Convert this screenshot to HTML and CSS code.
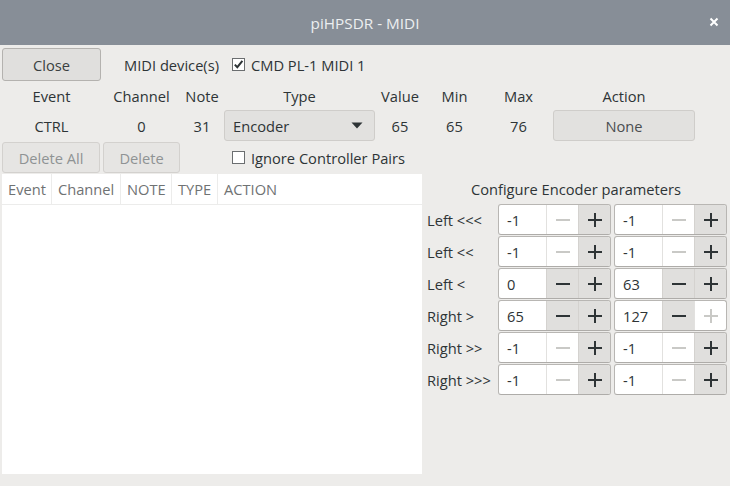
FILE: index.html
```html
<!DOCTYPE html>
<html>
<head>
<meta charset="utf-8">
<link rel="stylesheet" href="styles.css">
</head>
<body>
<div class="window">
  <header class="titlebar">
    <span class="title">piHPSDR - MIDI</span>
    <span class="close-x"><svg width="10" height="10" viewBox="0 0 10 10"><path d="M1.5 1.5 L8.5 8.5 M8.5 1.5 L1.5 8.5" stroke="#ffffff" stroke-width="2" fill="none"/></svg></span>
  </header>
  <main class="content">
    <div class="top-grid">
      <button class="btn btn-close">Close</button>
      <span class="lbl device-lbl">MIDI device(s)</span>
      <label class="check check-device">
        <span class="box"><svg width="11" height="11" viewBox="0 0 11 11"><path d="M1.8 5.6 L4.3 8.2 L9.4 1.9" stroke="#2e3436" stroke-width="2" fill="none"/></svg></span>
        <span>CMD PL-1 MIDI 1</span>
      </label>

      <span class="lbl c1">Event</span>
      <span class="lbl c2">Channel</span>
      <span class="lbl c3">Note</span>
      <span class="lbl c4">Type</span>
      <span class="lbl c5">Value</span>
      <span class="lbl c6">Min</span>
      <span class="lbl c7">Max</span>
      <span class="lbl c8">Action</span>

      <span class="lbl c1">CTRL</span>
      <span class="lbl c2">0</span>
      <span class="lbl c3">31</span>
      <div class="combo c4"><span>Encoder</span><svg width="12" height="7" viewBox="0 0 12 7"><path d="M0.5 0.5 L11.5 0.5 L6 6.5 Z" fill="#2e3436"/></svg></div>
      <span class="lbl c5">65</span>
      <span class="lbl c6">65</span>
      <span class="lbl c7">76</span>
      <button class="btn btn-action c8">None</button>

      <button class="btn btn-disabled c1">Delete All</button>
      <button class="btn btn-disabled c2">Delete</button>
      <label class="check check-ignore">
        <span class="box"></span>
        <span>Ignore Controller Pairs</span>
      </label>
    </div>

    <div class="lower">
      <div class="table">
        <div class="thead">
          <span class="th th-event">Event</span>
          <span class="th th-channel">Channel</span>
          <span class="th th-note">NOTE</span>
          <span class="th th-type">TYPE</span>
          <span class="th th-action">ACTION</span>
        </div>
      </div>

      <div class="encoder-panel">
        <div class="panel-title">Configure Encoder parameters</div>
        <div class="enc-grid">
          <span class="enc-lbl">Left &lt;&lt;&lt;</span>
          <div class="spin"><span class="entry">-1</span><span class="sb minus off"></span><span class="sb plus on"></span></div>
          <div class="spin"><span class="entry">-1</span><span class="sb minus off"></span><span class="sb plus on"></span></div>

          <span class="enc-lbl">Left &lt;&lt;</span>
          <div class="spin"><span class="entry">-1</span><span class="sb minus off"></span><span class="sb plus on"></span></div>
          <div class="spin"><span class="entry">-1</span><span class="sb minus off"></span><span class="sb plus on"></span></div>

          <span class="enc-lbl">Left &lt;</span>
          <div class="spin"><span class="entry">0</span><span class="sb minus on"></span><span class="sb plus on"></span></div>
          <div class="spin"><span class="entry">63</span><span class="sb minus on"></span><span class="sb plus on"></span></div>

          <span class="enc-lbl">Right &gt;</span>
          <div class="spin"><span class="entry">65</span><span class="sb minus on"></span><span class="sb plus on"></span></div>
          <div class="spin"><span class="entry">127</span><span class="sb minus on"></span><span class="sb plus off"></span></div>

          <span class="enc-lbl">Right &gt;&gt;</span>
          <div class="spin"><span class="entry">-1</span><span class="sb minus off"></span><span class="sb plus on"></span></div>
          <div class="spin"><span class="entry">-1</span><span class="sb minus off"></span><span class="sb plus on"></span></div>

          <span class="enc-lbl">Right &gt;&gt;&gt;</span>
          <div class="spin"><span class="entry">-1</span><span class="sb minus off"></span><span class="sb plus on"></span></div>
          <div class="spin"><span class="entry">-1</span><span class="sb minus off"></span><span class="sb plus on"></span></div>
        </div>
      </div>
    </div>
  </main>
</div>
</body>
</html>
```

FILE: styles.css
```css
* { box-sizing: border-box; }
html, body { margin: 0; padding: 0; }
body {
  width: 730px;
  height: 486px;
  overflow: hidden;
  font-family: "Open Sans", "Noto Sans", sans-serif;
  font-size: 14.67px;
  color: #2e3436;
  background: #edecea;
}
.window { width: 730px; height: 486px; display: flex; flex-direction: column; }

.titlebar {
  height: 45px;
  flex: 0 0 45px;
  background: #878e97;
  display: flex;
  align-items: center;
  justify-content: center;
  position: relative;
}
.title { color: #eceef0; font-size: 15.3px; }
.close-x { position: absolute; right: 11px; top: 17px; width: 10px; height: 10px; display: flex; }

.content { flex: 1; display: flex; flex-direction: column; }

.top-grid {
  display: grid;
  grid-template-columns: 99px 77px 40px 151px 46px 59px 65px 142px;
  grid-template-rows: 33px 27px 31px 31px;
  column-gap: 2px;
  row-gap: 1px;
  padding: 3px 0 0 2px;
  align-items: center;
}
.lbl { text-align: center; white-space: nowrap; }
.c1 { grid-column: 1; }
.c2 { grid-column: 2; }
.c3 { grid-column: 3; }
.c4 { grid-column: 4; }
.c5 { grid-column: 5; }
.c6 { grid-column: 6; }
.c7 { grid-column: 7; }
.c8 { grid-column: 8; }

.device-lbl { grid-column: 2 / 4; justify-self: end; margin-right: 3px; }

.btn {
  font-family: inherit;
  font-size: 14.67px;
  height: 100%;
  width: 100%;
  margin: 0;
  padding: 0;
  border-radius: 3px;
  color: #2e3436;
  background: #e0dfdd;
  border: 1px solid #b4b2af;
}
.btn-close { grid-column: 1; color: #3a3f41; }
.btn-action { background: #e2e1df; border-color: #cfcdca; color: #4a4e50; }
.btn-disabled { background: #e6e5e3; border-color: #d3d1ce; color: #8f9394; }
.btn-disabled.c1 { width: 98px; }

.check { display: flex; align-items: center; gap: 6px; padding-left: 8px; white-space: nowrap; }
.check-device { grid-column: 4 / 9; }
.check-ignore { grid-column: 4 / 9; }
.box {
  width: 13px; height: 13px;
  background: #ffffff;
  border: 1px solid #6b6e70;
  display: flex; align-items: center; justify-content: center;
}

.combo {
  height: 100%;
  display: flex;
  align-items: center;
  justify-content: space-between;
  padding: 0 11px 0 8px;
  background: #e2e1df;
  border: 1px solid #cfcdca;
  border-radius: 3px;
}

.lower { display: flex; margin-top: 1px; padding-left: 2px; gap: 2px; }

.table { width: 420px; height: 300px; background: #ffffff; }
.thead { display: flex; height: 31px; border-bottom: 1px solid #ececeb; }
.th {
  color: #6f7273;
  display: flex;
  align-items: center;
  padding-left: 6px;
  border-right: 1px solid #ececeb;
  white-space: nowrap;
}
.th-event { width: 50px; }
.th-channel { width: 69px; }
.th-note { width: 51px; }
.th-type { width: 46px; }
.th-action { flex: 1; border-right: none; }

.encoder-panel { width: 306px; display: flex; flex-direction: column; }
.panel-title { height: 30px; display: flex; align-items: center; justify-content: center; padding-right: 2px; }
.enc-grid {
  display: grid;
  grid-template-columns: 71px 113px 113px;
  grid-auto-rows: 31px;
  column-gap: 3px;
  row-gap: 1px;
  align-items: center;
}
.enc-lbl { padding-left: 3px; white-space: nowrap; }

.spin {
  height: 31px;
  display: flex;
  border: 1px solid #b8b6b3;
  border-bottom-color: #aeaca9;
  border-radius: 3px;
  overflow: hidden;
  background: #ffffff;
}
.entry { width: 47px; display: flex; align-items: center; padding-left: 8px; }
.sb { width: 32px; position: relative; border-left: 1px solid #e2e1df; }
.sb.plus { flex: 1; }
.sb.on { background: #e0dfdd; border-left-color: #d4d2cf; }
.entry + .sb.on { border-left-color: #d4d2cf; }
.sb::before, .sb::after {
  content: "";
  position: absolute;
  left: 50%;
  top: 50%;
  background: #2e3436;
}
.sb.off::before, .sb.off::after { background: #c9c9c6; }
.sb::before { width: 14px; height: 2px; margin-left: -7px; margin-top: -1px; }
.sb.plus::after { width: 2px; height: 14px; margin-left: -1px; margin-top: -7px; }
```
